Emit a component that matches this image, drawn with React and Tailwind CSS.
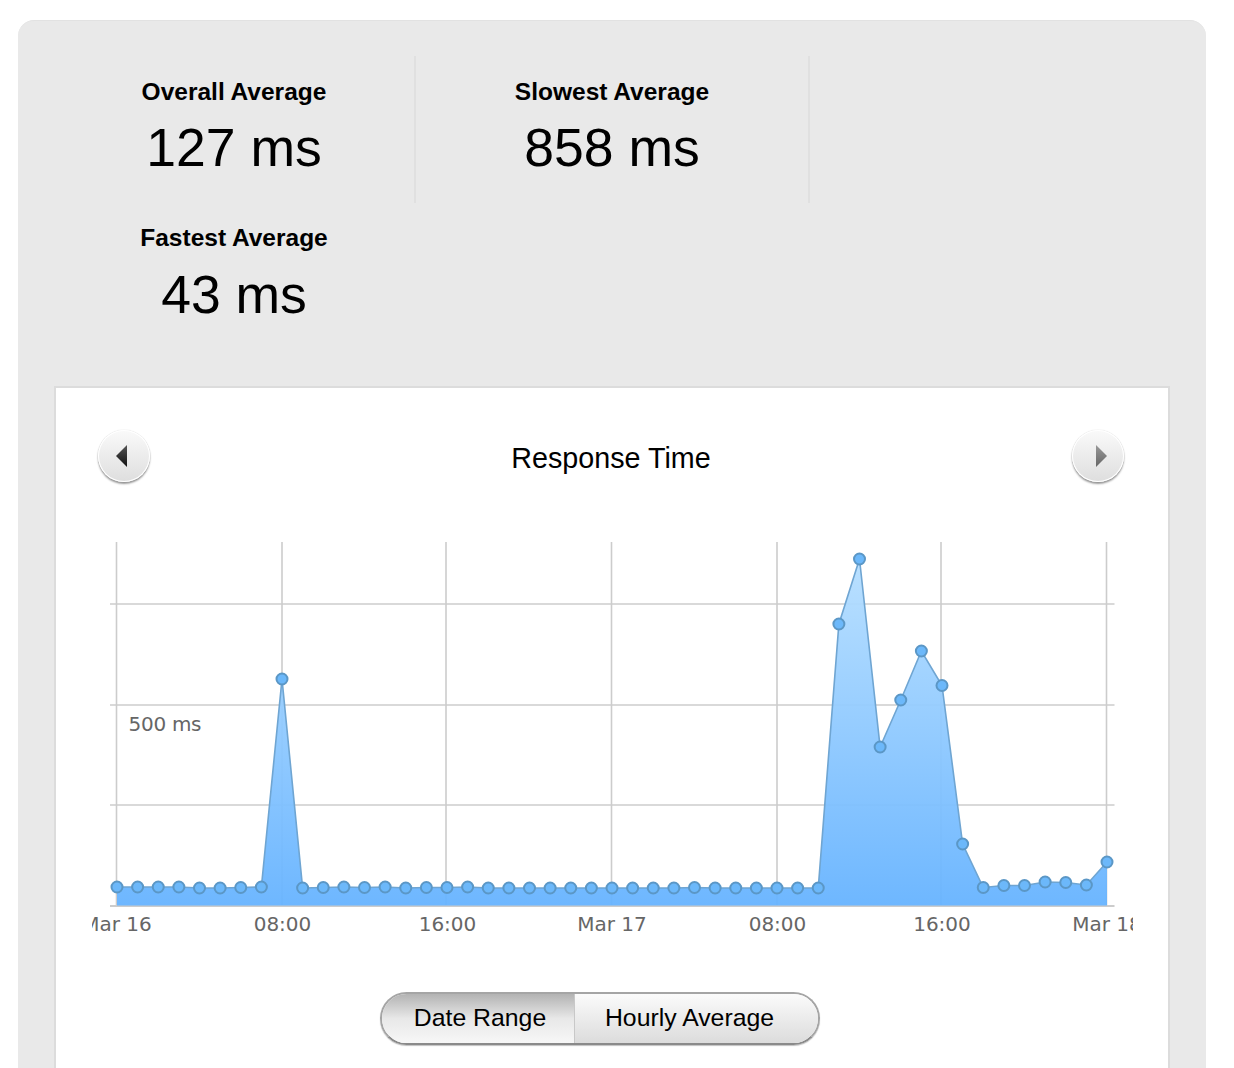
import React from "react";

const FONT = "font-['Liberation_Sans',Arial,sans-serif]";

// y values of the response series, one point every 20.625px from x=117
const series = [
  887, 887, 887, 887, 888, 888, 887.5, 887, 679, 888, 887.5, 887, 887.5, 887, 888, 887.5, 887.5,
  887, 888, 888, 888, 888, 888, 888, 888, 888, 888, 888, 887.5, 888, 888, 888, 888, 888, 888,
  624, 559, 747, 700, 651, 685.5, 844, 887.5, 885.5, 885.5, 882, 882.5, 885, 862,
];
const points = series.map((y, i) => [117 + i * 20.625, y]);
const linePath = points.map(([x, y]) => `${x},${y}`).join(" ");
const areaPath = `117,905.5 ${linePath} 1107,905.5`;

const vLines = [116.5, 282, 446, 611.5, 777, 941, 1106.5];
const hLines = [604, 705, 805];
const xLabels = [
  [117, "Mar 16"],
  [282.5, "08:00"],
  [447.5, "16:00"],
  [612, "Mar 17"],
  [777.5, "08:00"],
  [942, "16:00"],
  [1107, "Mar 18"],
];

function Stat({ label, value, divider, tight }) {
  return (
    <div
      className={`h-[147px] flex flex-col items-center border-r-2 ${divider ? "border-[#e0e0e0]" : "border-transparent"} ${tight ? "pt-[20px]" : "pt-[21px]"}`}
    >
      <div className="text-[24.5px] leading-[30px] font-bold text-black">{label}</div>
      <div className={`text-[53.5px] leading-[60px] text-black ${tight ? "mt-[12px]" : "mt-[11px]"}`}>{value}</div>
    </div>
  );
}

function RoundButton({ dir }) {
  const dark = dir === "left";
  return (
    <button className="w-[52px] h-[52px] mb-[3px] rounded-full flex items-center justify-center bg-linear-to-b from-[#fafafa] to-[#dedede] shadow-[0_2px_2px_rgba(0,0,0,0.4),0_0_1px_rgba(0,0,0,0.3),inset_0_0_0_1px_#fff]">
      <svg
        width="14"
        height="22"
        viewBox="0 0 14 22"
        className={dark ? "mr-[4px]" : "ml-[6px]"}
      >
        <defs>
          <linearGradient id={`arrow-${dir}`} x1="0" y1="0" x2="0" y2="1">
            <stop offset="0" stopColor={dark ? "#555" : "#999"} />
            <stop offset="1" stopColor={dark ? "#111" : "#666"} />
          </linearGradient>
        </defs>
        <polygon
          points={dark ? "12,0 12,22 1,11" : "2,0 2,22 13,11"}
          fill={`url(#arrow-${dir})`}
        />
      </svg>
    </button>
  );
}

function Chart() {
  return (
    <svg viewBox="92 540 1041 405" className="block w-[1041px] h-[405px] ml-[36px] mt-[55px]">
      <defs>
        <linearGradient id="area" gradientUnits="userSpaceOnUse" x1="0" y1="559" x2="0" y2="906">
          <stop offset="0" stopColor="#b7dfff" />
          <stop offset="1" stopColor="#66b3ff" />
        </linearGradient>
      </defs>
      {hLines.map((y) => (
        <line key={y} x1="110" x2="1114.5" y1={y} y2={y} stroke="#cccccc" strokeWidth="1.6" />
      ))}
      {vLines.map((x) => (
        <line key={x} x1={x} x2={x} y1="542" y2="906" stroke="#cccccc" strokeWidth="1.6" />
      ))}
      <line x1="110" x2="1114.5" y1="906" y2="906" stroke="#cccccc" strokeWidth="2" />
      <polygon points={areaPath} fill="url(#area)" fillOpacity="0.95" />
      <polyline points={linePath} fill="none" stroke="#6fa5d2" strokeWidth="1.6" />
      {points.map(([x, y]) => (
        <circle key={x} cx={x} cy={y} r="5.5" fill="#6cb8fa" stroke="#5b97c6" strokeWidth="2" />
      ))}
      <text x="128.5" y="731" fontSize="20" fill="#666" fontFamily="'DejaVu Sans',sans-serif" textLength="73">
        500 ms
      </text>
      {xLabels.map(([x, label], i) => (
        <text
          key={i}
          x={x}
          y="931"
          fontSize="20"
          fill="#666"
          textAnchor="middle"
          fontFamily="'DejaVu Sans',sans-serif"
        >
          {label}
        </text>
      ))}
    </svg>
  );
}

function Segmented() {
  return (
    <div className="flex justify-center mt-[47px] mr-[24px]">
      <div className="flex h-[53px] w-[440px] rounded-full overflow-hidden border-2 border-[#a5a5a5] border-b-[#8a8a8a] shadow-[0_1px_1px_rgba(0,0,0,0.25)]">
        <div className="w-[193px] flex items-center justify-center pl-[4px] pb-[1px] text-[24.8px] text-black bg-linear-to-b from-[#b3b3b3] via-[#e8e8e8] to-[#f7f7f7] border-r border-[#c8c8c8]">
          Date Range
        </div>
        <div className="flex-1 flex items-center justify-center pr-[14px] pb-[1px] text-[24.8px] text-black bg-linear-to-b from-[#fbfbfb] to-[#dcdcdc]">
          Hourly Average
        </div>
      </div>
    </div>
  );
}

export default function App() {
  return (
    <div className={`h-[1068px] overflow-hidden bg-white pt-5 ${FONT}`}>
      <div className="ml-[18px] mr-[28px] h-[1048px] rounded-t-[16px] bg-[#e9e9e9] border-t border-[#e2e2e2] pl-[36px] pr-[36px] pt-[35px]">
        <div className="grid grid-cols-[362px_394px_360px]">
          <Stat label="Overall Average" value="127 ms" divider />
          <Stat label="Slowest Average" value="858 ms" divider />
          <div />
          <Stat label="Fastest Average" value="43 ms" tight />
        </div>
        <div className="mt-[36px] h-[700px] bg-white border-2 border-[#dcdcdc] border-b-0">
          <div className="flex items-center justify-between pl-[42px] pr-[44px] pt-[42px]">
            <RoundButton dir="left" />
            <div className="text-[28.7px] leading-[34px] text-black">Response Time</div>
            <RoundButton dir="right" />
          </div>
          <Chart />
          <Segmented />
        </div>
      </div>
    </div>
  );
}
